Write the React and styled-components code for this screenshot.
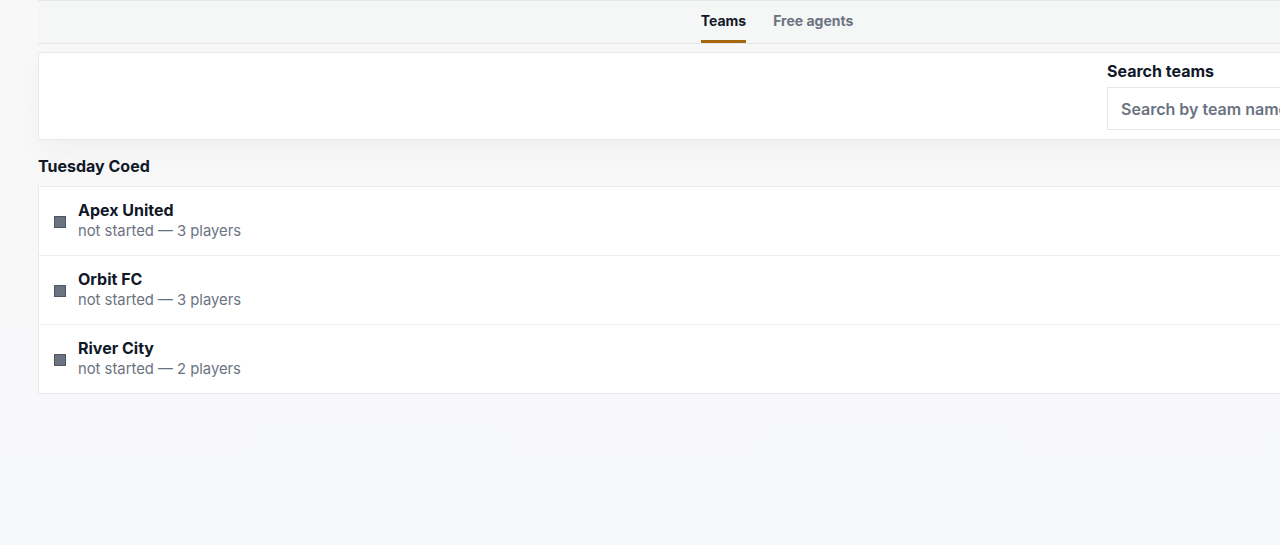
import React from 'react'
import styled, { createGlobalStyle } from 'styled-components'

const GlobalStyle = createGlobalStyle`
  html, body {
    margin: 0;
    padding: 0;
    overflow: hidden;
  }
  body {
    min-height: 545px;
    background: linear-gradient(to bottom, #f8f8f8, #f7f8fa);
    font-family: Inter, "Noto Sans", sans-serif;
    color: #111827;
  }
`

const teams = [
  { name: 'Apex United', status: 'not started', players: 3 },
  { name: 'Orbit FC', status: 'not started', players: 3 },
  { name: 'River City', status: 'not started', players: 2 },
]

const App = () => {
  return (
    <>
      <GlobalStyle />
      <Page>
        <Wrapper>
          <TabBar>
            <Tab active>Teams</Tab>
            <Tab>Free agents</Tab>
          </TabBar>
          <FilterPanel>
            <SearchBlock>
              <SearchLabel htmlFor="search">Search teams</SearchLabel>
              <SearchInput id="search" placeholder="Search by team name" />
            </SearchBlock>
          </FilterPanel>
          <GroupTitle>Tuesday Coed</GroupTitle>
          <TeamList>
            {teams.map((t) => (
              <TeamRow key={t.name}>
                <Swatch />
                <TeamInfo>
                  <TeamName>{t.name}</TeamName>
                  <TeamMeta>{t.status} — {t.players} players</TeamMeta>
                </TeamInfo>
              </TeamRow>
            ))}
          </TeamList>
        </Wrapper>
      </Page>
    </>
  )
}

export default App

const Page = styled.div`
  padding-left: 38px;
  min-height: 545px;
`
const Wrapper = styled.div`
  width: 1478px;
`
const TabBar = styled.div`
  display: flex;
  justify-content: center;
  gap: 27px;
  height: 42px;
  background: #f5f6f6;
  border-top: 1px solid #e4e6e8;
  border-bottom: 1px solid #e4e6e8;
`
const Tab = styled.div`
  display: flex;
  align-items: center;
  height: 39px;
  font-size: 14px;
  font-weight: 700;
  color: ${(p) => (p.active ? '#111827' : '#6b7280')};
  border-bottom: 3px solid ${(p) => (p.active ? '#a5680f' : 'transparent')};
`
const FilterPanel = styled.div`
  margin-top: 8px;
  background: #fff;
  border: 1px solid #e8e9eb;
  box-shadow: 0 12px 30px rgba(0, 0, 0, 0.035);
  display: flex;
  justify-content: flex-end;
  padding: 8px 16px 0 16px;
  box-sizing: border-box;
  height: 88px;
`
const SearchBlock = styled.div`
  width: 392px;
  display: flex;
  flex-direction: column;
`
const SearchLabel = styled.label`
  font-size: 16px;
  font-weight: 700;
  color: #111827;
  line-height: 20px;
  margin-bottom: 6px;
`
const SearchInput = styled.input`
  height: 43px;
  box-sizing: border-box;
  border: 1px solid #e5e7eb;
  padding: 0 13px;
  font-family: Inter, "Noto Sans", sans-serif;
  font-size: 16px;
  font-weight: 600;
  outline: none;
  &::placeholder {
    color: #6b7280;
  }
`
const GroupTitle = styled.h2`
  margin: 16px 0 10px;
  font-size: 16px;
  font-weight: 700;
  line-height: 20px;
  color: #111827;
`
const TeamList = styled.div`
  background: #fff;
  border: 1px solid #e8e9eb;
`
const TeamRow = styled.div`
  display: flex;
  align-items: center;
  gap: 12px;
  height: 68px;
  padding: 0 15px;
  & + & {
    border-top: 1px solid #ececee;
  }
`
const Swatch = styled.span`
  width: 10px;
  height: 10px;
  background: #6b7280;
  border: 1px solid #4b5563;
  margin-top: 2px;
`
const TeamInfo = styled.div`
  display: flex;
  flex-direction: column;
`
const TeamName = styled.div`
  font-size: 16px;
  font-weight: 700;
  line-height: 21px;
  color: #111827;
`
const TeamMeta = styled.div`
  font-size: 14.8px;
  line-height: 21px;
  color: #6b7280;
`
